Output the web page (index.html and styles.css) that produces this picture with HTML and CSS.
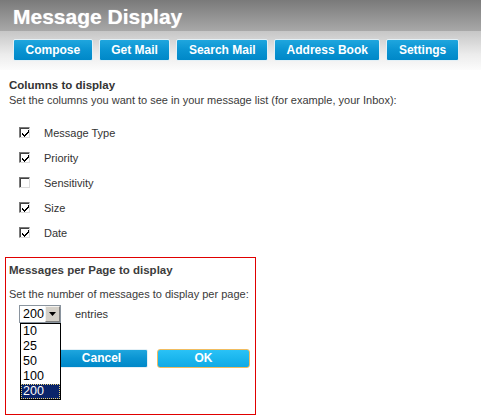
FILE: index.html
```html
<!DOCTYPE html>
<html>
<head>
<meta charset="utf-8">
<title>Message Display</title>
<link rel="stylesheet" href="styles.css">
</head>
<body>
<header class="masthead">
  <h1 class="title">Message Display</h1>
  <nav class="toolbar">
    <button class="tbtn">Compose</button>
    <button class="tbtn">Get Mail</button>
    <button class="tbtn">Search Mail</button>
    <button class="tbtn">Address Book</button>
    <button class="tbtn">Settings</button>
  </nav>
</header>
<main class="content">
  <h2 class="heading">Columns to display</h2>
  <p class="desc">Set the columns you want to see in your message list (for example, your Inbox):</p>
  <ul class="cols">
    <li class="col-row"><span class="cb"><svg class="tick" viewBox="0 0 7 7" width="7" height="7"><path d="M6 0h1v3h-1v1h-1v1h-1v1h-1v1h-1v-1h-1v-1h-1v-2h1v1h1v1h1v-1h1v-1h1v-1h1z"/></svg></span><span class="col-label">Message Type</span></li>
    <li class="col-row"><span class="cb"><svg class="tick" viewBox="0 0 7 7" width="7" height="7"><path d="M6 0h1v3h-1v1h-1v1h-1v1h-1v1h-1v-1h-1v-1h-1v-2h1v1h1v1h1v-1h1v-1h1v-1h1z"/></svg></span><span class="col-label">Priority</span></li>
    <li class="col-row"><span class="cb"></span><span class="col-label">Sensitivity</span></li>
    <li class="col-row"><span class="cb"><svg class="tick" viewBox="0 0 7 7" width="7" height="7"><path d="M6 0h1v3h-1v1h-1v1h-1v1h-1v1h-1v-1h-1v-1h-1v-2h1v1h1v1h1v-1h1v-1h1v-1h1z"/></svg></span><span class="col-label">Size</span></li>
    <li class="col-row"><span class="cb"><svg class="tick" viewBox="0 0 7 7" width="7" height="7"><path d="M6 0h1v3h-1v1h-1v1h-1v1h-1v1h-1v-1h-1v-1h-1v-2h1v1h1v1h1v-1h1v-1h1v-1h1z"/></svg></span><span class="col-label">Date</span></li>
  </ul>
  <section class="perpage">
    <h2 class="heading">Messages per Page to display</h2>
    <p class="desc desc-gap">Set the number of messages to display per page:</p>
    <div class="select-row">
      <div class="select-wrap">
        <div class="select">
          <span class="select-value">200</span>
          <span class="select-arrow"><svg viewBox="0 0 7 4" width="7" height="4"><path d="M0 0h7l-3.5 4z"/></svg></span>
        </div>
        <ul class="select-list">
          <li class="opt">10</li>
          <li class="opt">25</li>
          <li class="opt">50</li>
          <li class="opt">100</li>
          <li class="opt opt-selected">200</li>
        </ul>
      </div>
      <span class="entries">entries</span>
    </div>
    <div class="actions">
      <button class="btn">Cancel</button>
      <button class="btn btn-ok">OK</button>
    </div>
  </section>
</main>
</body>
</html>
```
FILE: styles.css
```css
* { box-sizing: border-box; }
html, body { margin: 0; padding: 0; background: #fff; }
body {
  font-family: "Liberation Sans", Arial, sans-serif;
  color: #333;
  width: 481px;
  height: 419px;
  overflow: hidden;
}
.masthead { display: block; }
.title {
  margin: 0;
  height: 31px;
  padding: 5px 0 0 13px;
  font-size: 21px;
  line-height: 24px;
  font-weight: bold;
  color: #fff;
  background: linear-gradient(to bottom, #7a7a7a 0%, #a8a8a8 100%);
  text-shadow: 0 0 1px rgba(255,255,255,0.6);
}
.toolbar {
  height: 39px;
  padding: 8px 0 0 13px;
  display: flex;
  gap: 6px;
  align-items: flex-start;
  background: linear-gradient(to bottom, #c6c6c6 0%, #ececec 60%, #fcfcfc 100%);
}
.tbtn, .btn {
  font-family: "Liberation Sans", Arial, sans-serif;
  font-weight: bold;
  font-size: 12px;
  color: #fff;
  border: 1px solid #e4f0f6;
  border-radius: 2px;
  background: linear-gradient(to bottom, #1fa6de 0%, #0a94d2 50%, #0088c8 100%);
  cursor: pointer;
  margin: 0;
}
.tbtn {
  height: 22px;
  padding: 0 11.5px;
  line-height: 20px;
}
.content { padding: 0 9px; }
.heading {
  margin: 8px 0 0;
  font-size: 11.5px;
  line-height: 14px;
  font-weight: bold;
  color: #333;
}
.desc {
  margin: 1px 0 0;
  font-size: 11px;
  line-height: 14px;
  color: #3a3a3a;
}
.cols {
  list-style: none;
  margin: 13px 0 0;
  padding: 0 0 0 10px;
}
.col-row {
  height: 25px;
  display: flex;
  align-items: center;
  gap: 14px;
  font-size: 11px;
  color: #333;
}
.cb {
  width: 11px;
  height: 11px;
  flex: none;
  background: #fff;
  border-top: 1px solid #7a7a7a;
  border-left: 1px solid #7a7a7a;
  border-right: 1px solid #dcdcdc;
  border-bottom: 1px solid #dcdcdc;
  box-shadow: inset 1px 1px 0 #404040;
  display: flex;
  align-items: center;
  justify-content: center;
  padding: 1px 0 0 1px;
}
.tick { display: block; fill: #000; }
.perpage {
  margin: 12px 0 0 -4px;
  width: 251px;
  height: 158px;
  border: 1px solid #e00000;
  padding: 5px 3px 0;
}
.perpage .heading { margin-top: 0; color: #3c3c3c; }
.desc-gap { margin-top: 10px; }
.select-row {
  margin: 4px 0 0 10px;
  display: flex;
  align-items: center;
  gap: 14px;
}
.select-wrap { position: relative; }
.select {
  width: 42px;
  height: 18px;
  border: 1px solid #8a949e;
  background: #fff;
  display: flex;
  align-items: stretch;
}
.select-value {
  flex: 1;
  font-size: 12.5px;
  line-height: 16px;
  padding-left: 3px;
  color: #000;
}
.select-arrow {
  width: 15px;
  background: #d4d0c8;
  border-left: 1px solid #f4f2ee;
  border-top: 1px solid #f4f2ee;
  border-right: 1px solid #808080;
  border-bottom: 1px solid #808080;
  display: flex;
  align-items: center;
  justify-content: center;
}
.select-arrow svg { fill: #000; display: block; }
.select-list {
  position: absolute;
  left: 1px;
  top: 18px;
  width: 41px;
  margin: 0;
  padding: 0;
  list-style: none;
  background: #fff;
  border: 1px solid #000;
  z-index: 2;
}
.opt {
  height: 15px;
  line-height: 15px;
  font-size: 12.5px;
  padding-left: 2px;
  color: #000;
}
.opt-selected {
  background: #0a246a;
  color: #fff;
  outline: 1px dotted #e8d27a;
  outline-offset: -1px;
}
.entries { font-size: 11px; color: #333; }
.actions {
  margin: 26px 0 0 46px;
  display: flex;
  gap: 9px;
}
.btn {
  width: 93px;
  height: 19px;
  padding: 0;
  line-height: 17px;
}
.btn-ok {
  background: linear-gradient(to bottom, #2ac2f6 0%, #18b4ec 60%, #12aae4 100%);
  border: 1px solid #f0bc60;
  border-radius: 3px;
}
```
